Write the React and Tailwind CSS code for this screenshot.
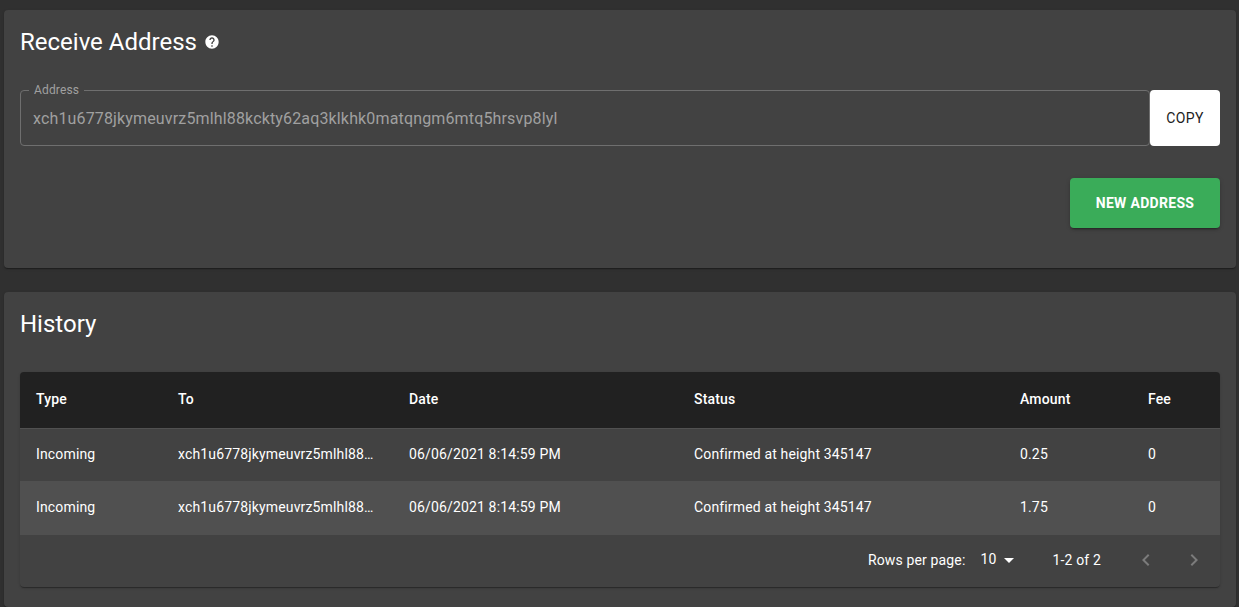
import React from "react";

const FONT = "font-['Roboto',sans-serif]";

const rows = [
  { type: "Incoming", to: "xch1u6778jkymeuvrz5mlhl88kckty62aq3klkhk0matqngm6mtq5hrsvp8lyl", date: "06/06/2021 8:14:59 PM", status: "Confirmed at height 345147", amount: "0.25", fee: "0" },
  { type: "Incoming", to: "xch1u6778jkymeuvrz5mlhl88kckty62aq3klkhk0matqngm6mtq5hrsvp8lyl", date: "06/06/2021 8:14:59 PM", status: "Confirmed at height 345147", amount: "1.75", fee: "0" },
];

const GRID = "grid grid-cols-[142px_231px_285px_326px_128px_88px] items-center pb-[2px]";

const HelpIcon = () => (
  <svg width="16" height="16" viewBox="0 0 24 24" fill="#ffffff" className="block shrink-0">
    <path d="M12 2C6.48 2 2 6.48 2 12s4.48 10 10 10 10-4.48 10-10S17.52 2 12 2zm1 17h-2v-2h2v2zm2.07-7.75l-.9.92C13.45 12.9 13 13.5 13 15h-2v-.5c0-1.1.45-2.1 1.17-2.83l1.24-1.26c.37-.36.59-.86.59-1.41 0-1.1-.9-2-2-2s-2 .9-2 2H8c0-2.21 1.79-4 4-4s4 1.79 4 4c0 .88-.36 1.68-.93 2.25z" />
  </svg>
);

const Chevron = ({ d }) => (
  <svg width="24" height="24" viewBox="0 0 24 24" fill="#ffffff" fillOpacity="0.3" className="block">
    <path d={d} />
  </svg>
);

const Card = ({ className, children }) => (
  <div className={`rounded bg-[#424242] shadow-[0_2px_1px_-1px_rgba(0,0,0,0.2),0_1px_1px_0_rgba(0,0,0,0.14),0_1px_3px_0_rgba(0,0,0,0.12)] ${className}`}>
    {children}
  </div>
);

const ReceiveAddress = () => (
  <Card className="h-[258px] p-4">
    <div className="flex items-center gap-[7px]">
      <h5 className="m-0 text-2xl leading-8 font-normal text-white">Receive Address</h5>
      <HelpIcon />
    </div>

    <div className="mt-8 flex">
      <div className="relative flex h-14 flex-1 items-center rounded-l rounded-r border border-[#6f6f6f] pt-[2px] pl-[12px]">
        {/* outlined field label sits in the border notch */}
        <span className="absolute -top-[8px] left-[8px] bg-[#424242] px-[5px] text-xs leading-[14px] tracking-[0.15px] text-[#a0a0a0]">
          Address
        </span>
        <span className="text-base tracking-[0.15px] text-[#a0a0a0]">
          xch1u6778jkymeuvrz5mlhl88kckty62aq3klkhk0matqngm6mtq5hrsvp8lyl
        </span>
      </div>
      <button className="h-14 w-[70px] rounded bg-white text-sm font-normal tracking-[0.4px] text-[#212121]">
        COPY
      </button>
    </div>

    <div className="mt-8 flex justify-end">
      <button className="h-[50px] w-[150px] rounded bg-[#3aac59] text-sm font-bold tracking-[0.3px] text-white shadow-[0_3px_1px_-2px_rgba(0,0,0,0.2),0_2px_2px_0_rgba(0,0,0,0.14),0_1px_5px_0_rgba(0,0,0,0.12)]">
        NEW ADDRESS
      </button>
    </div>
  </Card>
);

const History = () => (
  <Card className="mt-6 px-4 pt-4 pb-5">
    <h5 className="m-0 text-2xl leading-8 font-normal text-white">History</h5>

    <div className="mt-8 overflow-hidden rounded bg-[#424242] tracking-[0.15px] shadow-[0_2px_1px_-1px_rgba(0,0,0,0.2),0_1px_1px_0_rgba(0,0,0,0.14),0_1px_3px_0_rgba(0,0,0,0.12)]">
      {/* Header */}
      <div className={`${GRID} h-[57px] border-b border-[#515151] bg-[#212121] text-sm font-medium text-white`}>
        {["Type", "To", "Date", "Status", "Amount", "Fee"].map((label) => (
          <div key={label} className="px-4">{label}</div>
        ))}
      </div>

      {/* Rows */}
      {rows.map((row, i) => (
        <div
          key={i}
          className={`${GRID} text-sm text-white ${i === 0 ? "h-[52px] bg-[#424242]" : "h-[54px] bg-[#505050]"}`}
        >
          <div className="px-4">{row.type}</div>
          <div className="pl-4">
            <div className="w-[196px] truncate">{row.to}</div>
          </div>
          <div className="px-4">{row.date}</div>
          <div className="px-4">{row.status}</div>
          <div className="px-4">{row.amount}</div>
          <div className="px-4">{row.fee}</div>
        </div>
      ))}

      {/* Footer */}
      <div className="flex h-[52px] items-center justify-end pb-[2px] text-sm text-white">
        <span>Rows per page:</span>
        <span className="mb-[2px] ml-[15px]">10</span>
        <svg width="24" height="24" viewBox="0 0 24 24" fill="#ffffff" className="block">
          <path d="M7 10l5 5 5-5z" />
        </svg>
        <span className="ml-[32px]">1-2 of 2</span>
        <div className="mr-[14px] ml-[33px] flex gap-[24px]">
          <Chevron d="M15.41 16.59L10.83 12l4.58-4.59L14 6l-6 6 6 6 1.41-1.41z" />
          <Chevron d="M8.59 16.59L13.17 12 8.59 7.41 10 6l6 6-6 6-1.41-1.41z" />
        </div>
      </div>
    </div>
  </Card>
);

export default function App() {
  return (
    <div className={`${FONT} h-[607px] overflow-hidden bg-[#303030] pt-[10px] pr-[3px] pl-1`}>
      <ReceiveAddress />
      <History />
    </div>
  );
}
